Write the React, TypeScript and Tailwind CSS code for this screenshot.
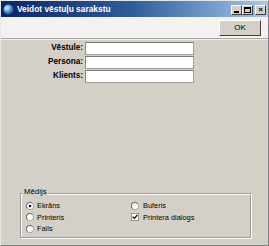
import React from "react";

const fields = ["Vēstule:", "Persona:", "Klients:"];

function Radio({ checked }: { checked?: boolean }) {
  return (
    <svg width="8" height="8" viewBox="0 0 12 12" className="shrink-0">
      <circle cx="6" cy="6" r="5.5" fill="#ffffff" stroke="#808080" />
      <path d="M2 9.5A5 5 0 0 1 9.5 2" fill="none" stroke="#404040" strokeWidth="1" />
      {checked && <circle cx="6" cy="6" r="2" fill="#000000" />}
    </svg>
  );
}

function Check({ checked }: { checked?: boolean }) {
  return (
    <svg width="8" height="8" viewBox="0 0 12 12" className="shrink-0">
      <rect x="0.5" y="0.5" width="11" height="11" fill="#ffffff" stroke="#707070" />
      {checked && <path d="M2.5 5.5 L5 8 L9.5 3" fill="none" stroke="#000000" strokeWidth="1.8" />}
    </svg>
  );
}

function WinButton({ children }: { children: React.ReactNode }) {
  return (
    <div className="w-[11px] h-[10px] bg-[#d4d0c8] border border-t-white border-l-white border-r-[#404040] border-b-[#404040] flex items-center justify-center">
      {children}
    </div>
  );
}

export default function App() {
  return (
    <div
      className="w-[269px] h-[246px] bg-[#d4d0c8] flex flex-col border border-t-[#e8e6e2] border-l-[#e8e6e2] border-r-[#808080] border-b-[#808080] overflow-hidden"
      style={{ fontFamily: '"Liberation Sans", Arial, sans-serif' }}
    >
      {/* title bar */}
      <div className="h-[16px] flex items-center pl-[2px] pr-[2px] bg-gradient-to-r from-[#0a246a] via-[#2f5f9a] to-[#a6caf0]">
        <svg width="11" height="11" viewBox="0 0 12 12" className="shrink-0">
          <defs>
            <radialGradient id="g" cx="0.35" cy="0.35" r="0.7">
              <stop offset="0" stopColor="#e8f4ff" />
              <stop offset="0.5" stopColor="#5aa0e0" />
              <stop offset="1" stopColor="#1a4a90" />
            </radialGradient>
          </defs>
          <circle cx="6" cy="6" r="5.5" fill="url(#g)" />
        </svg>
        <span className="ml-[3px] text-white font-bold text-[8.4px] leading-none whitespace-nowrap">
          Veidot vēstuļu sarakstu
        </span>
        <div className="ml-auto flex items-center mt-[2px]">
          <WinButton>
            <div className="w-[5px] h-[2px] bg-black mt-[4px] -ml-[1px]" />
          </WinButton>
          <WinButton>
            <div className="w-[7px] h-[6px] border border-black border-t-2" />
          </WinButton>
          <div className="w-[2px]" />
          <WinButton>
            <span className="text-[8px] font-bold leading-none text-black">×</span>
          </WinButton>
        </div>
      </div>

      {/* toolbar */}
      <div className="h-[22px] bg-[#f3f2f0] border-b border-[#a8a6a2] flex items-center justify-end pr-[7px]">
        <button className="w-[42px] h-[16px] bg-[#d4d0c8] border border-t-white border-l-white border-r-[#404040] border-b-[#404040] text-[8px] leading-none text-black">
          OK
        </button>
      </div>
      <div className="h-px bg-[#f0efec]" />

      {/* form */}
      <div className="pt-[2px] flex flex-col gap-px">
        {fields.map((f) => (
          <div key={f} className="flex items-center h-[13px]">
            <div className="w-[84px] pr-[2px] text-right font-bold text-[8.2px] leading-none text-black">{f}</div>
            <div className="w-[109px] h-[13px] bg-white border border-[#a4a29e] border-t-[#7c7a76] border-l-[#8c8a86]" />
          </div>
        ))}
      </div>

      <div className="flex-1" />

      {/* group box */}
      <div className="ml-[19px] mr-[17px] mb-[7px] relative border border-[#9c9a96] shadow-[1px_1px_0_#ffffff,inset_1px_1px_0_#ffffff] h-[45px] pl-[5px] pt-[6px]">
        <span className="absolute -top-[6px] left-[2px] bg-[#d4d0c8] px-px text-[7.8px] leading-none text-black">Mēdijs</span>
        <div className="grid grid-cols-[105px_1fr] text-[7.4px] leading-none text-black">
          <div className="flex flex-col">
            <div className="flex items-center h-[11.5px] gap-[3px]">
              <Radio checked />
              <span>Ekrāns</span>
            </div>
            <div className="flex items-center h-[11.5px] gap-[3px]">
              <Radio />
              <span>Printeris</span>
            </div>
            <div className="flex items-center h-[11.5px] gap-[3px]">
              <Radio />
              <span>Fails</span>
            </div>
          </div>
          <div className="flex flex-col">
            <div className="flex items-center h-[11.5px] gap-[4px]">
              <Radio />
              <span>Buferis</span>
            </div>
            <div className="flex items-center h-[11.5px] gap-[4px]">
              <Check checked />
              <span>Printera dialogs</span>
            </div>
          </div>
        </div>
      </div>
    </div>
  );
}
